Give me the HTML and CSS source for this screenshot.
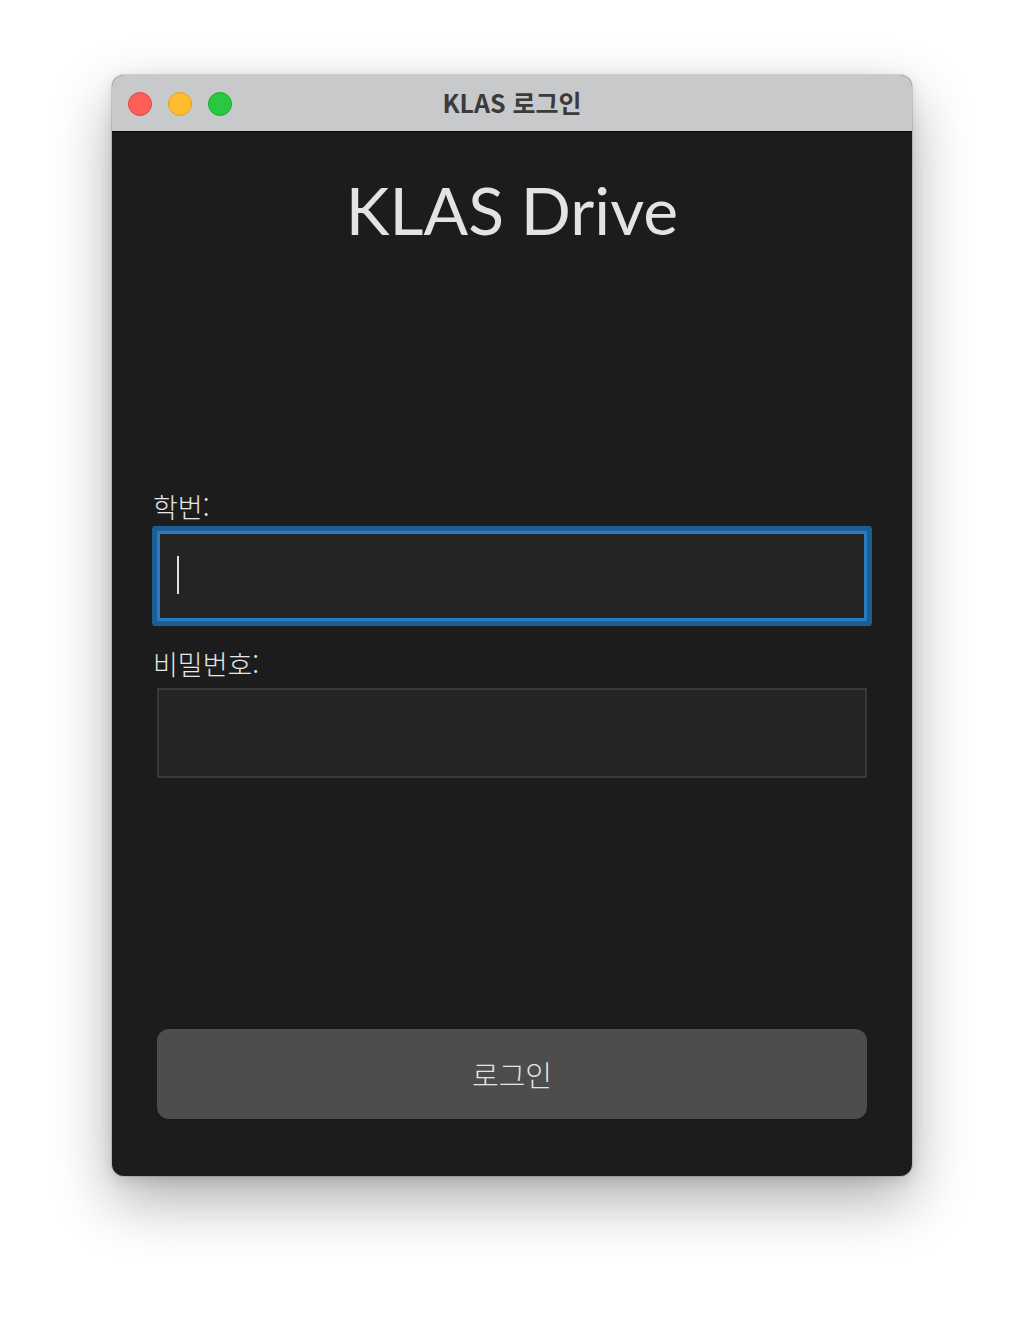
FILE: index.html
```html
<!DOCTYPE html>
<html lang="ko">
<head>
<meta charset="utf-8">
<title>KLAS 로그인</title>
<link rel="stylesheet" href="styles.css">
</head>
<body>
<div class="window">
  <div class="titlebar">
    <div class="lights">
      <span class="light red"></span>
      <span class="light yellow"></span>
      <span class="light green"></span>
    </div>
    <div class="title">KLAS 로그인</div>
  </div>
  <div class="content">
    <h1 class="brand">KLAS Drive</h1>
    <label class="label">학번:</label>
    <div class="field focused"><span class="caret"></span></div>
    <label class="label label-2">비밀번호:</label>
    <div class="field"></div>
    <button class="login">로그인</button>
  </div>
</div>
</body>
</html>
```

FILE: styles.css
```css
html, body {
  margin: 0;
  padding: 0;
  background: #ffffff;
}
body {
  width: 1024px;
  height: 1324px;
  padding-top: 75px;
  box-sizing: border-box;
  font-family: "Noto Sans CJK KR", "Noto Sans", sans-serif;
}
.window {
  width: 800px;
  height: 1101px;
  margin: 0 auto;
  border-radius: 12px;
  overflow: hidden;
  background: #1c1c1c;
  box-shadow: 0 0 0 1px rgba(0,0,0,0.12), 0 24px 60px rgba(0,0,0,0.32), 0 4px 14px rgba(0,0,0,0.12);
  display: flex;
  flex-direction: column;
}
.titlebar {
  position: relative;
  height: 56px;
  background: #c8c9cb;
  border-bottom: 1px solid #0a0a0a;
  display: flex;
  align-items: center;
  justify-content: center;
  flex-shrink: 0;
}
.lights {
  position: absolute;
  left: 16px;
  top: 17px;
  display: flex;
  gap: 16px;
}
.light {
  width: 24px;
  height: 24px;
  border-radius: 50%;
  box-sizing: border-box;
}
.red { background: #fe5f57; border: 1px solid #e0443e; }
.yellow { background: #febc2e; border: 1px solid #dea123; }
.green { background: #28c840; border: 1px solid #1aab29; }
.title {
  font-family: "Noto Sans CJK KR", "Noto Sans", sans-serif;
  font-weight: 700;
  font-size: 25px;
  color: #3b3b3c;
  margin-top: -2px;
}
.content {
  flex: 1;
  display: flex;
  flex-direction: column;
  padding: 0 45px;
}
.brand {
  margin: 38px 0 0;
  text-align: center;
  font-family: "Lato", sans-serif;
  font-weight: 400;
  font-size: 66px;
  line-height: 80px;
  letter-spacing: 0;
  color: #e3e3e3;
}
.label {
  margin: 240px 0 0 -4px;
  font-size: 27px;
  line-height: 34px;
  color: #e6e6e6;
  font-weight: 300;
}
.label-2 {
  margin-top: 26px;
}
.field {
  margin-top: 7px;
  height: 90px;
  box-sizing: border-box;
  background: #242424;
  border: 2px solid #393939;
  position: relative;
}
.field.focused {
  border: 3px solid #2a7bc1;
  box-shadow: 0 0 0 5px #1c5f95;
  border-radius: 1px;
}
.caret {
  position: absolute;
  left: 17px;
  top: 22px;
  width: 2px;
  height: 38px;
  background: #e0e0e0;
}
.login {
  margin-top: auto;
  margin-bottom: 57px;
  height: 90px;
  border: none;
  border-radius: 12px;
  background: #4d4d4d;
  color: #e4e4e4;
  font-family: "Noto Sans CJK KR", "Noto Sans", sans-serif;
  font-weight: 300;
  font-size: 29px;
  padding: 0;
}
```
